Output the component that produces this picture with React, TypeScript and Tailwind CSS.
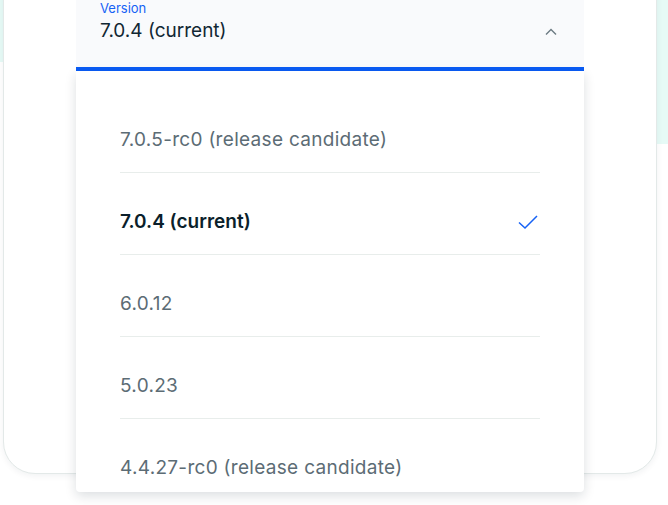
import React from "react";

const items = [
  { label: "7.0.5-rc0 (release candidate)", selected: false },
  { label: "7.0.4 (current)", selected: true },
  { label: "6.0.12", selected: false },
  { label: "5.0.23", selected: false },
  { label: "4.4.27-rc0 (release candidate)", selected: false },
];

export default function App() {
  return (
    <div
      className="relative w-[668px] h-[505px] overflow-hidden bg-white"
      style={{ fontFamily: "Inter, 'Open Sans', sans-serif" }}
    >
      {/* mint background decorations */}
      <div className="absolute left-0 top-0 w-[40px] h-[62px] bg-[#e6faf6] rounded-br-[20px]" />
      <div className="absolute right-0 top-0 w-[40px] h-[144px] bg-[#e6faf6]" />

      {/* card */}
      <div className="relative ml-[3px] mt-[-40px] w-[654px] h-[514px] bg-white border border-[#e3e9e8] rounded-b-[32px] shadow-[0_2px_6px_rgba(0,30,43,0.06)]" />

      {/* select */}
      <div className="absolute left-[76px] top-0 w-[508px]">
        <div className="bg-[#f9fafc] h-[67px] pl-[24px] pr-[26px] flex items-start justify-between">
          <div className="flex flex-col">
            <span className="text-[13px] leading-[16px] text-[#1662f5]">Version</span>
            <span className="mt-[3px] text-[19px] leading-[24px] text-[#112733]">7.0.4 (current)</span>
          </div>
          <svg className="mt-[27px]" width="14" height="9" viewBox="0 0 14 9" fill="none">
            <path d="M2 7.5 L7 2.5 L12 7.5" stroke="#6b7a82" strokeWidth="1.4" />
          </svg>
        </div>
        <div className="h-[4px] bg-[#0a5cf5]" />
        <div className="h-[421px] overflow-hidden bg-white rounded-b-[4px] shadow-[0_4px_12px_rgba(0,30,43,0.14)] pt-[20px] px-[44px]">
          {items.map((it, i) => (
            <div
              key={i}
              className={
                "flex items-center justify-between pt-[37px] pb-[20px] " +
                (i < items.length - 1 ? "border-b border-[#e8edeb]" : "")
              }
            >
              <span
                className={
                  "text-[19px] leading-[24px] " +
                  (it.selected
                    ? "font-semibold text-[#0b1f2b]"
                    : "tracking-[0.3px] text-[#5c6c75]")
                }
              >
                {it.label}
              </span>
              {it.selected && (
                <svg width="22" height="18" viewBox="0 0 22 18" fill="none" className="mr-[1px]">
                  <path d="M2 9.5 L8 15 L20 3" stroke="#1662f5" strokeWidth="1.5" />
                </svg>
              )}
            </div>
          ))}
        </div>
      </div>
    </div>
  );
}
